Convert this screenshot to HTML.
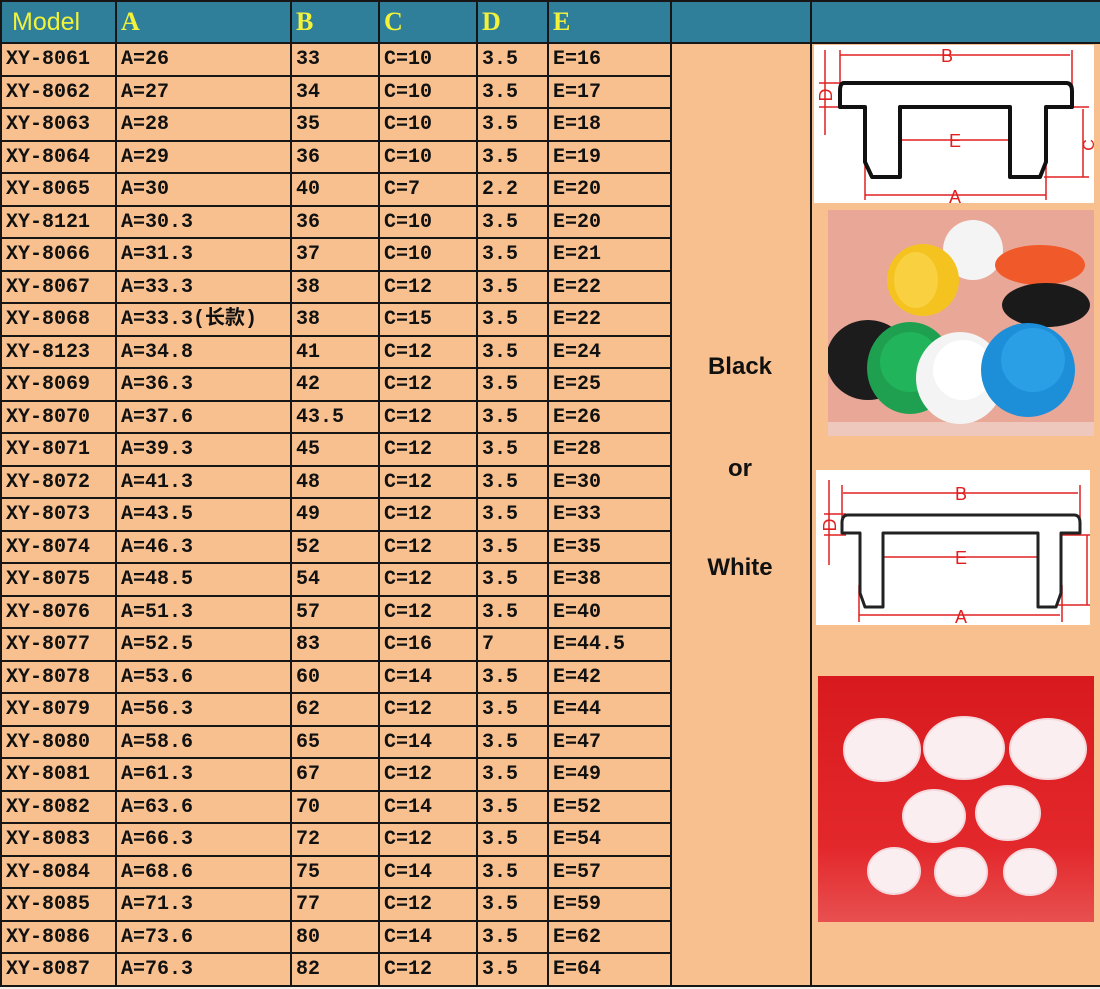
<!DOCTYPE html>
<html><head><meta charset="utf-8"><style>
html,body{margin:0;padding:0;background:#f4f0ec;}
#w{position:relative;width:1100px;height:989px;overflow:hidden;background:#f2efe9;}
table{position:absolute;left:0;top:0;border-collapse:collapse;table-layout:fixed;width:1100px;}
tr{height:32.5px;}
tr.h{height:42px;}
td{border:2px solid #161616;padding:2px 0 0 4px;background:#f8c08f;font-family:"Liberation Mono","Noto Sans CJK SC",monospace;font-weight:bold;font-size:20px;color:#111;white-space:nowrap;overflow:hidden;line-height:26px;}
tr.h td{background:#2f7f9b;color:#f2f23a;font-family:"Liberation Serif",serif;font-size:26px;line-height:36px;padding-top:0;}
tr.h td.m{font-family:"Liberation Sans",sans-serif;font-weight:normal;font-size:25px;padding-left:10px;}
.cw{position:absolute;left:670px;width:140px;text-align:center;font-family:"Liberation Sans",sans-serif;font-weight:bold;font-size:24px;color:#111;}
svg{position:absolute;}
</style></head><body><div id="w">
<table>
<colgroup><col style="width:115px"><col style="width:175px"><col style="width:88px"><col style="width:98px"><col style="width:71px"><col style="width:123px"><col style="width:140px"><col style="width:290px"></colgroup>
<tr class="h"><td class="m">Model</td><td>A</td><td>B</td><td>C</td><td>D</td><td>E</td><td></td><td></td></tr>
<tr><td>XY-8061</td><td>A=26</td><td>33</td><td>C=10</td><td>3.5</td><td>E=16</td><td rowspan="29"></td><td rowspan="29"></td></tr>
<tr><td>XY-8062</td><td>A=27</td><td>34</td><td>C=10</td><td>3.5</td><td>E=17</td></tr>
<tr><td>XY-8063</td><td>A=28</td><td>35</td><td>C=10</td><td>3.5</td><td>E=18</td></tr>
<tr><td>XY-8064</td><td>A=29</td><td>36</td><td>C=10</td><td>3.5</td><td>E=19</td></tr>
<tr><td>XY-8065</td><td>A=30</td><td>40</td><td>C=7</td><td>2.2</td><td>E=20</td></tr>
<tr><td>XY-8121</td><td>A=30.3</td><td>36</td><td>C=10</td><td>3.5</td><td>E=20</td></tr>
<tr><td>XY-8066</td><td>A=31.3</td><td>37</td><td>C=10</td><td>3.5</td><td>E=21</td></tr>
<tr><td>XY-8067</td><td>A=33.3</td><td>38</td><td>C=12</td><td>3.5</td><td>E=22</td></tr>
<tr><td>XY-8068</td><td>A=33.3(长款)</td><td>38</td><td>C=15</td><td>3.5</td><td>E=22</td></tr>
<tr><td>XY-8123</td><td>A=34.8</td><td>41</td><td>C=12</td><td>3.5</td><td>E=24</td></tr>
<tr><td>XY-8069</td><td>A=36.3</td><td>42</td><td>C=12</td><td>3.5</td><td>E=25</td></tr>
<tr><td>XY-8070</td><td>A=37.6</td><td>43.5</td><td>C=12</td><td>3.5</td><td>E=26</td></tr>
<tr><td>XY-8071</td><td>A=39.3</td><td>45</td><td>C=12</td><td>3.5</td><td>E=28</td></tr>
<tr><td>XY-8072</td><td>A=41.3</td><td>48</td><td>C=12</td><td>3.5</td><td>E=30</td></tr>
<tr><td>XY-8073</td><td>A=43.5</td><td>49</td><td>C=12</td><td>3.5</td><td>E=33</td></tr>
<tr><td>XY-8074</td><td>A=46.3</td><td>52</td><td>C=12</td><td>3.5</td><td>E=35</td></tr>
<tr><td>XY-8075</td><td>A=48.5</td><td>54</td><td>C=12</td><td>3.5</td><td>E=38</td></tr>
<tr><td>XY-8076</td><td>A=51.3</td><td>57</td><td>C=12</td><td>3.5</td><td>E=40</td></tr>
<tr><td>XY-8077</td><td>A=52.5</td><td>83</td><td>C=16</td><td>7</td><td>E=44.5</td></tr>
<tr><td>XY-8078</td><td>A=53.6</td><td>60</td><td>C=14</td><td>3.5</td><td>E=42</td></tr>
<tr><td>XY-8079</td><td>A=56.3</td><td>62</td><td>C=12</td><td>3.5</td><td>E=44</td></tr>
<tr><td>XY-8080</td><td>A=58.6</td><td>65</td><td>C=14</td><td>3.5</td><td>E=47</td></tr>
<tr><td>XY-8081</td><td>A=61.3</td><td>67</td><td>C=12</td><td>3.5</td><td>E=49</td></tr>
<tr><td>XY-8082</td><td>A=63.6</td><td>70</td><td>C=14</td><td>3.5</td><td>E=52</td></tr>
<tr><td>XY-8083</td><td>A=66.3</td><td>72</td><td>C=12</td><td>3.5</td><td>E=54</td></tr>
<tr><td>XY-8084</td><td>A=68.6</td><td>75</td><td>C=14</td><td>3.5</td><td>E=57</td></tr>
<tr><td>XY-8085</td><td>A=71.3</td><td>77</td><td>C=12</td><td>3.5</td><td>E=59</td></tr>
<tr><td>XY-8086</td><td>A=73.6</td><td>80</td><td>C=14</td><td>3.5</td><td>E=62</td></tr>
<tr><td>XY-8087</td><td>A=76.3</td><td>82</td><td>C=12</td><td>3.5</td><td>E=64</td></tr>
</table>
<div class="cw" style="top:353px">Black</div>
<div class="cw" style="top:455px">or</div>
<div class="cw" style="top:554px">White</div>

<svg style="left:814px;top:45px" width="280" height="158" viewBox="0 0 280 158">
<rect width="280" height="158" fill="#fff"/>
<g stroke="#e02020" stroke-width="1.5" fill="none">
<line x1="26" y1="10" x2="256" y2="10"/><line x1="26" y1="5" x2="26" y2="40"/><line x1="258" y1="5" x2="258" y2="40"/>
<line x1="51" y1="150" x2="232" y2="150"/><line x1="51" y1="115" x2="51" y2="155"/><line x1="232" y1="115" x2="232" y2="155"/>
<line x1="85" y1="95" x2="197" y2="95"/>
<line x1="11" y1="5" x2="11" y2="90"/><line x1="5" y1="38" x2="30" y2="38"/><line x1="5" y1="62" x2="30" y2="62"/>
<line x1="269" y1="64" x2="269" y2="132"/><line x1="230" y1="62" x2="275" y2="62"/><line x1="230" y1="132" x2="275" y2="132"/>
</g>
<g fill="#e02020" font-family="Liberation Sans,sans-serif" font-size="18">
<text x="133" y="17" text-anchor="middle">B</text>
<text x="141" y="158" text-anchor="middle">A</text>
<text x="141" y="102" text-anchor="middle">E</text>
<text x="-50" y="18" transform="rotate(-90)" text-anchor="middle">D</text>
<text x="-100" y="280" transform="rotate(-90)" text-anchor="middle" font-size="16">C</text>
</g>
<path d="M30 38 H252 Q258 38 258 46 V62 H232 V117 L226 132 H196 V62 H86 V132 H58 L51 117 V62 H26 V46 Q26 38 30 38 Z" fill="#fff" stroke="#111" stroke-width="4" stroke-linejoin="round"/>
</svg>

<svg style="left:828px;top:210px" width="266" height="226" viewBox="0 0 266 226">
<rect width="266" height="226" fill="#e9a797"/>
<rect x="0" y="212" width="266" height="14" fill="#efc8bd"/>
<ellipse cx="145" cy="40" rx="30" ry="30" fill="#f4f4f4"/>
<ellipse cx="212" cy="55" rx="45" ry="20" fill="#f05a2a"/>
<ellipse cx="95" cy="70" rx="36" ry="36" fill="#f5c320"/><ellipse cx="88" cy="70" rx="22" ry="28" fill="#f8d040"/>
<ellipse cx="218" cy="95" rx="44" ry="22" fill="#1a1a1a"/>
<ellipse cx="40" cy="150" rx="42" ry="40" fill="#1c1c1c"/>
<ellipse cx="82" cy="158" rx="43" ry="46" fill="#1ea050"/><ellipse cx="82" cy="152" rx="30" ry="30" fill="#22b45a"/>
<ellipse cx="132" cy="168" rx="44" ry="46" fill="#f4f4f4"/><ellipse cx="135" cy="160" rx="30" ry="30" fill="#fff"/>
<ellipse cx="200" cy="160" rx="47" ry="47" fill="#1d8ed8"/><ellipse cx="205" cy="150" rx="32" ry="32" fill="#2a9fe6"/>
</svg>

<svg style="left:816px;top:470px" width="274" height="155" viewBox="0 0 274 155">
<rect width="274" height="155" fill="#fff"/>
<g stroke="#e02020" stroke-width="1.5" fill="none">
<line x1="27" y1="23" x2="262" y2="23"/><line x1="26" y1="15" x2="26" y2="48"/><line x1="264" y1="15" x2="264" y2="48"/>
<line x1="43" y1="145" x2="244" y2="145"/><line x1="43" y1="115" x2="43" y2="152"/><line x1="246" y1="115" x2="246" y2="152"/>
<line x1="68" y1="87" x2="224" y2="87"/>
<line x1="13" y1="10" x2="13" y2="95"/><line x1="8" y1="44" x2="30" y2="44"/><line x1="8" y1="65" x2="30" y2="65"/>
<line x1="271" y1="65" x2="271" y2="135"/><line x1="240" y1="65" x2="274" y2="65"/><line x1="240" y1="135" x2="274" y2="135"/>
</g>
<g fill="#e02020" font-family="Liberation Sans,sans-serif" font-size="18">
<text x="145" y="30" text-anchor="middle">B</text>
<text x="145" y="153" text-anchor="middle">A</text>
<text x="145" y="94" text-anchor="middle">E</text>
<text x="-55" y="20" transform="rotate(-90)" text-anchor="middle">D</text>
</g>
<path d="M32 45 H258 Q264 45 264 53 V63 H245 V123 L240 137 H222 V63 H67 V137 H49 L44 123 V63 H26 V53 Q26 45 32 45 Z" fill="#fff" stroke="#222" stroke-width="3" stroke-linejoin="round"/>
</svg>

<svg style="left:818px;top:676px" width="276" height="246" viewBox="0 0 276 246">
<defs><linearGradient id="rg" x1="0" y1="0" x2="0" y2="1"><stop offset="0" stop-color="#d81a1e"/><stop offset="0.7" stop-color="#e3282c"/><stop offset="1" stop-color="#e85050"/></linearGradient></defs>
<rect width="276" height="246" fill="url(#rg)"/>
<g fill="#fbeef0" stroke="#f4d8dc" stroke-width="2">
<ellipse cx="64" cy="74" rx="38" ry="31"/><ellipse cx="146" cy="72" rx="40" ry="31"/><ellipse cx="230" cy="73" rx="38" ry="30"/>
<ellipse cx="116" cy="140" rx="31" ry="26"/><ellipse cx="190" cy="137" rx="32" ry="27"/>
<ellipse cx="76" cy="195" rx="26" ry="23"/><ellipse cx="143" cy="196" rx="26" ry="24"/><ellipse cx="212" cy="196" rx="26" ry="23"/>
</g>
</svg>
</div></body></html>
